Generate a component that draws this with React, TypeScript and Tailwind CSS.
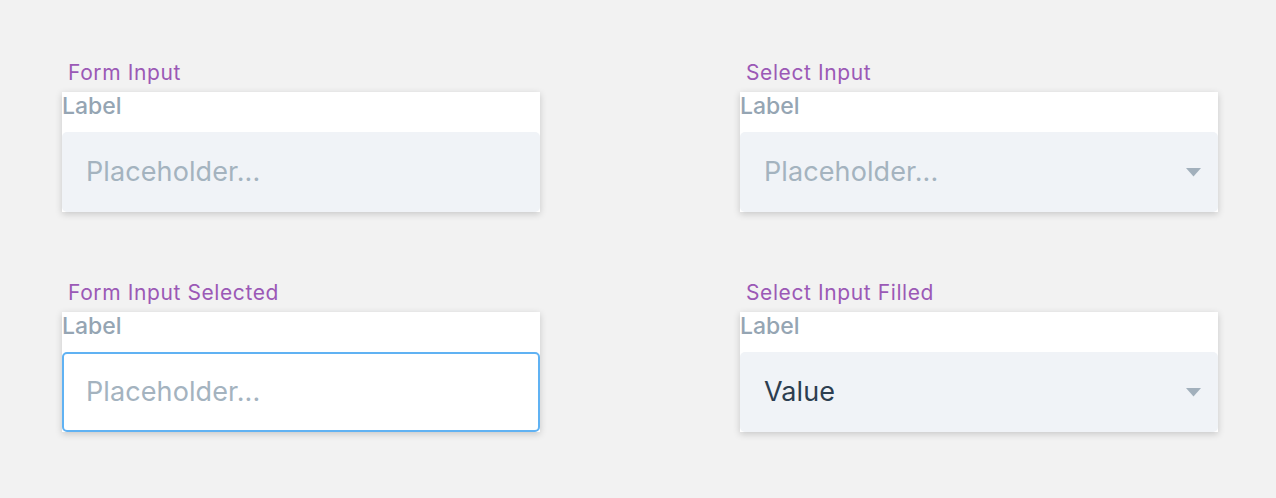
type FieldProps = {
  title: string;
  kind: "input" | "select";
  state?: "default" | "focused" | "filled";
};

function Field({ title, kind, state = "default" }: FieldProps) {
  const focused = state === "focused";
  const filled = state === "filled";

  return (
    <div className="flex flex-col">
      <div className="pl-[6px] text-[21px] tracking-[0.6px] leading-6 text-[#9b59b6] mb-[7px]">{title}</div>
      <div className="bg-white shadow-[0_2px_7px_rgba(0,0,0,0.18)]">
        <div className="h-10 text-[23px] leading-7 font-medium text-[#95a5b3]">Label</div>
        <div
          className={
            focused
              ? "h-20 flex items-center rounded-[5px] border-2 border-[#60b2f3] bg-white pl-[22px] pr-6"
              : "h-20 flex items-center rounded-[5px] bg-[#f0f3f7] pl-6 pr-[17px]"
          }
        >
          <span
            className={
              filled
                ? "flex-1 text-[27px] tracking-[0.1px] text-[#2c3e50]"
                : "flex-1 text-[27px] tracking-[0.1px] text-[#a4b3bf]"
            }
          >
            {filled ? "Value" : "Placeholder..."}
          </span>
          {kind === "select" && (
            <svg width="15" height="9" viewBox="0 0 15 9" className="shrink-0">
              <path d="M0 0 H15 L7.5 8.5 Z" fill="#a2b0bc" />
            </svg>
          )}
        </div>
      </div>
    </div>
  );
}

export default function App() {
  return (
    <div
      className="min-h-[498px] bg-[#f2f2f2] pt-[61px] pl-[62px]"
      style={{ fontFamily: "Inter, 'Noto Sans', sans-serif" }}
    >
      <div className="grid grid-cols-[478px_478px] gap-x-[200px] gap-y-[69px]">
        <Field title="Form Input" kind="input" />
        <Field title="Select Input" kind="select" />
        <Field title="Form Input Selected" kind="input" state="focused" />
        <Field title="Select Input Filled" kind="select" state="filled" />
      </div>
    </div>
  );
}
